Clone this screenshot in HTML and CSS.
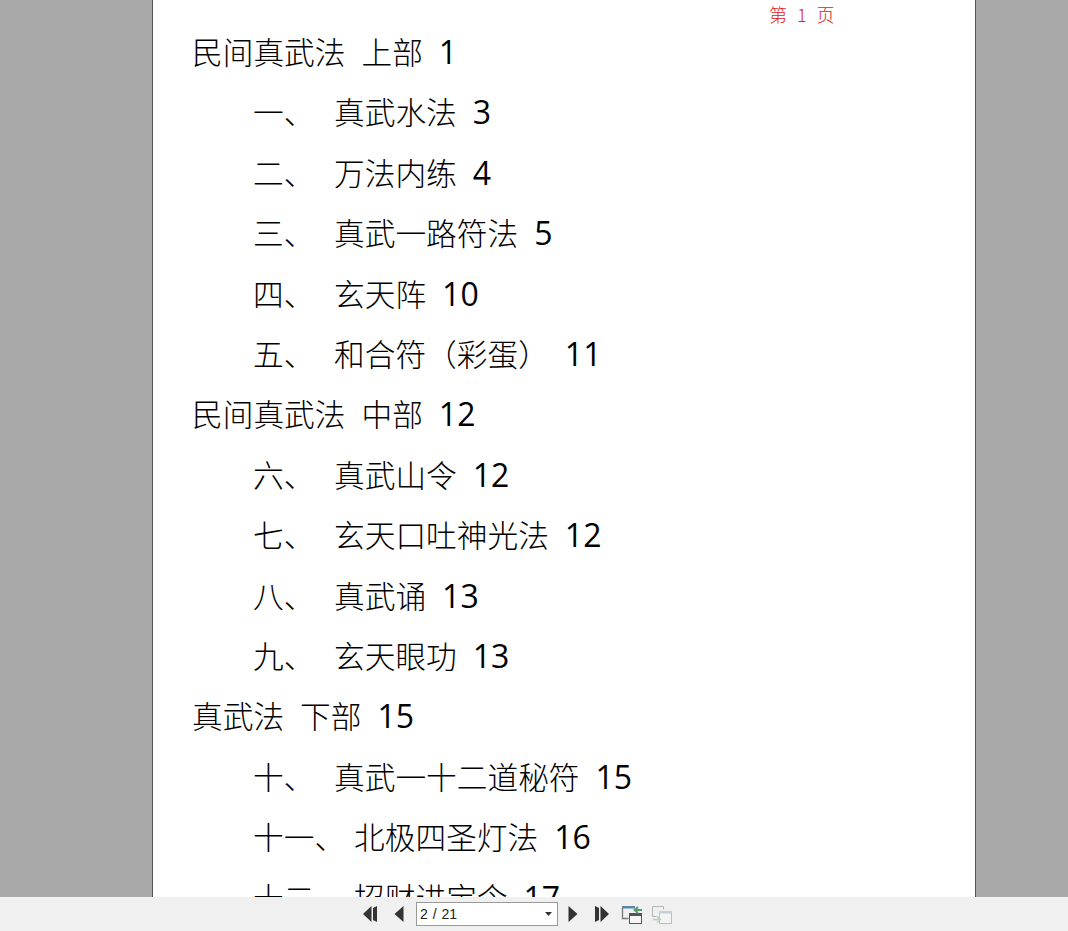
FILE: index.html
```html
<!DOCTYPE html>
<html lang="zh-CN">
  <head>
    <meta charset="UTF-8" />
    <title>民间真武法</title>
    <link rel="stylesheet" href="styles.css">
  </head>
  <body>
    <div class="viewer">
      <div class="page">
        <div class="page-no">第 1 页</div>
        <ul class="toc">
          <li class="part">民间真武法<span class="sub">上部</span><span class="num">1</span></li>
          <li class="item"><span class="label">一、</span>真武水法<span class="num">3</span></li>
          <li class="item"><span class="label">二、</span>万法内练<span class="num">4</span></li>
          <li class="item"><span class="label">三、</span>真武一路符法<span class="num">5</span></li>
          <li class="item"><span class="label">四、</span>玄天阵<span class="num">10</span></li>
          <li class="item"><span class="label">五、</span>和合符（彩蛋）<span class="num">11</span></li>
          <li class="part">民间真武法<span class="sub">中部</span><span class="num">12</span></li>
          <li class="item"><span class="label">六、</span>真武山令<span class="num">12</span></li>
          <li class="item"><span class="label">七、</span>玄天口吐神光法<span class="num">12</span></li>
          <li class="item"><span class="label">八、</span>真武诵<span class="num">13</span></li>
          <li class="item"><span class="label">九、</span>玄天眼功<span class="num">13</span></li>
          <li class="part">真武法<span class="sub">下部</span><span class="num">15</span></li>
          <li class="item"><span class="label">十、</span>真武一十二道秘符<span class="num">15</span></li>
          <li class="item"><span class="label">十一、</span>北极四圣灯法<span class="num">16</span></li>
          <li class="item"><span class="label">十二、</span>招财进宝令<span class="num">17</span></li>
        </ul>
      </div>
    </div>

    <div class="toolbar">
      <svg class="btn first" width="16" height="18" viewBox="0 0 16 18"><path d="M9.500 1v16L1 9zM11 3l4-2v16l-4-2z" fill="#333"/></svg>
      <svg class="btn prev" width="10" height="18" viewBox="0 0 10 18"><path d="M9.500 1v16L.5 9z" fill="#333"/></svg>
      <div class="page-select">
        <span>2 / 21</span>
        <svg width="7" height="4" viewBox="0 0 7 4"><path d="M0 0h7L3.500 4z" fill="#333"/></svg>
      </div>
      <svg class="btn next" width="10" height="18" viewBox="0 0 10 18"><path d="M.5 1v16l9-8z" fill="#333"/></svg>
      <svg class="btn last" width="16" height="18" viewBox="0 0 16 18"><path d="M1 1l4 2v12l-4 2zM6.500 1v16L15 9z" fill="#333"/></svg>
      <svg class="btn back" width="22" height="22" viewBox="0 0 22 22">
        <path d="M1 3h13v2.500H1z" fill="#5d86ad"/>
        <path d="M1.500 5v10.500h6" fill="none" stroke="#777" stroke-width="1.300"/>
        <rect x="8.500" y="12.500" width="12" height="8" fill="#f6f6f6" stroke="#555"/>
        <path d="M8 10h13v2.500H8z" fill="#555"/>
        <path d="M21 7h-7M17 4l-3.500 3 3.500 3" fill="none" stroke="#4f9d69" stroke-width="1.800"/>
      </svg>
      <svg class="btn forward" width="22" height="22" viewBox="0 0 22 22">
        <path d="M1.500 3.500h11v3M1.500 3.500v10h4" fill="none" stroke="#b5b5b5"/>
        <rect x="8.500" y="8.500" width="12" height="12" fill="#f4f4f4" stroke="#bcbcbc"/>
        <path d="M8 8h13v2.500H8z" fill="#c6ced6"/>
        <path d="M2 16.500h7M6 13.500l3.500 3-3.500 3" fill="none" stroke="#b4d2bd" stroke-width="1.500"/>
      </svg>
    </div>
  </body>
</html>
```

FILE: styles.css
```css
* {
  box-sizing: border-box;
}

html,
body {
  height: 100%;
}

body,
ul,
li {
  margin: 0;
  padding: 0;
}

li {
  list-style-type: none;
}

body {
  display: flex;
  flex-direction: column;
  font-family: "Open Sans", "Noto Sans CJK SC", sans-serif;
  overflow: hidden;
}

.viewer {
  flex: 1;
  min-height: 0;
  padding-left: 152px;
  background-color: #a9a9a9;
}

.page {
  width: 824px;
  height: 100%;
  overflow: hidden;
  background-color: #fff;
  border-left: 1px solid #555;
  border-right: 1px solid #555;
}

.page-no {
  height: 22px;
  padding-top: 3px;
  padding-left: 616px;
  font-family: "Noto Sans CJK SC", sans-serif;
  font-size: 18px;
  line-height: 22px;
  font-weight: 300;
  color: #e02020;
  word-spacing: 6px;
}

.toc {
  color: #000;
  font-size: 30.7px;
  line-height: 60.4px;
  font-weight: 300;
  white-space: nowrap;
}

.part {
  padding-left: 39px;
}

.item {
  padding-left: 100px;
}

.label {
  display: inline-block;
  min-width: 81px;
  padding-right: 9px;
}

.sub {
  margin-left: 16px;
}

.num {
  margin-left: 16px;
  font-size: 32px;
  font-weight: 400;
}

.toolbar {
  flex: none;
  height: 34px;
  display: flex;
  align-items: center;
  padding-left: 362px;
  background-color: #f0f0f0;
}

.btn {
  flex: none;
}

.prev {
  margin-left: 16px;
}

.page-select {
  width: 142px;
  height: 24px;
  margin-left: 12px;
  padding: 0 5px 0 3px;
  display: flex;
  align-items: center;
  justify-content: space-between;
  background-color: #fff;
  border: 1px solid #999;
  font-family: "Liberation Sans", sans-serif;
  font-size: 14px;
  word-spacing: 1px;
  color: #222;
}

.next {
  margin-left: 10px;
}

.last {
  margin-left: 16px;
}

.back {
  margin-left: 11px;
}

.forward {
  margin-left: 8px;
}
```
